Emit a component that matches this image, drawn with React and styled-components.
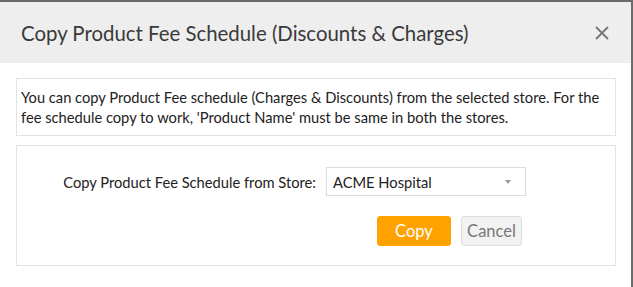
import React from 'react';
import styled, { createGlobalStyle } from 'styled-components';

const GlobalStyle = createGlobalStyle`
  html, body {
    margin: 0;
    padding: 0;
    background: #fff;
  }
  body {
    font-family: Lato, 'Liberation Sans', sans-serif;
    color: #222;
  }
`;

const Modal = styled.div`
  width: 631px;
  height: 285px;
  border-top: 2px solid #6b6b6b;
  border-right: 2px solid #6b6b6b;
  background: #fff;
`;

const Header = styled.div`
  display: flex;
  align-items: center;
  justify-content: space-between;
  height: 61px;
  padding: 0 22px 0 21px;
  background: #eeeeee;
`;

const Title = styled.h4`
  margin: 0;
  font-size: 20.4px;
  font-weight: 400;
  color: #3a3a3a;
`;

const CloseButton = styled.button`
  display: flex;
  padding: 0;
  border: 0;
  background: none;
  cursor: pointer;
`;

const Body = styled.div`
  display: flex;
  flex-direction: column;
  gap: 9px;
  padding: 15px 15px 0 16px;
`;

const Panel = styled.div`
  border: 1px solid #e3e3e3;
  padding: ${({ $pad }) => $pad};
`;

const InfoText = styled.p`
  margin: 0;
  font-size: 14.7px;
  line-height: 20px;
  color: #222;
`;

const FormRow = styled.div`
  display: flex;
  align-items: center;
`;

const Label = styled.label`
  width: 299px;
  padding-right: 10px;
  text-align: right;
  font-size: 14.7px;
  color: #222;
`;

const Select = styled.div`
  position: relative;
  display: flex;
  align-items: center;
  box-sizing: border-box;
  width: 200px;
  height: 29px;
  padding: 0 6px;
  border: 1px solid #dcdcdc;
  font-size: 14.7px;
  color: #222;
`;

const Caret = styled.span`
  position: absolute;
  right: 14px;
  top: 12px;
  border-left: 3px solid transparent;
  border-right: 3px solid transparent;
  border-top: 4px solid #999;
`;

const ButtonRow = styled.div`
  display: flex;
  justify-content: flex-end;
  gap: 10px;
  width: 505px;
  margin-top: 20px;
`;

const Button = styled.button`
  box-sizing: border-box;
  height: 30px;
  padding: 0;
  width: ${({ $primary }) => ($primary ? '74px' : '61px')};
  border-radius: 3px;
  border: 1px solid ${({ $primary }) => ($primary ? '#ffa200' : '#dedede')};
  background: ${({ $primary }) => ($primary ? '#ffa200' : '#f2f2f2')};
  color: ${({ $primary }) => ($primary ? '#fff' : '#777')};
  font-family: Lato, 'Liberation Sans', sans-serif;
  font-size: 16.5px;
  cursor: pointer;
`;

function CloseIcon() {
  return (
    <svg width="14" height="14" viewBox="0 0 14 14">
      <path d="M1 1 L13 13 M13 1 L1 13" stroke="#777" strokeWidth="1.8" />
    </svg>
  );
}

export default function App() {
  return (
    <>
      <GlobalStyle />
      <Modal>
        <Header>
          <Title>Copy Product Fee Schedule (Discounts &amp; Charges)</Title>
          <CloseButton aria-label="Close">
            <CloseIcon />
          </CloseButton>
        </Header>
        <Body>
          <Panel $pad="8px 4px">
            <InfoText>
              You can copy Product Fee schedule (Charges &amp; Discounts) from the selected store. For the fee
              schedule copy to work, 'Product Name' must be same in both the stores.
            </InfoText>
          </Panel>
          <Panel $pad="21px 0 19px 0">
            <FormRow>
              <Label>Copy Product Fee Schedule from Store:</Label>
              <Select>
                ACME Hospital
                <Caret />
              </Select>
            </FormRow>
            <ButtonRow>
              <Button $primary>Copy</Button>
              <Button>Cancel</Button>
            </ButtonRow>
          </Panel>
        </Body>
      </Modal>
    </>
  );
}
